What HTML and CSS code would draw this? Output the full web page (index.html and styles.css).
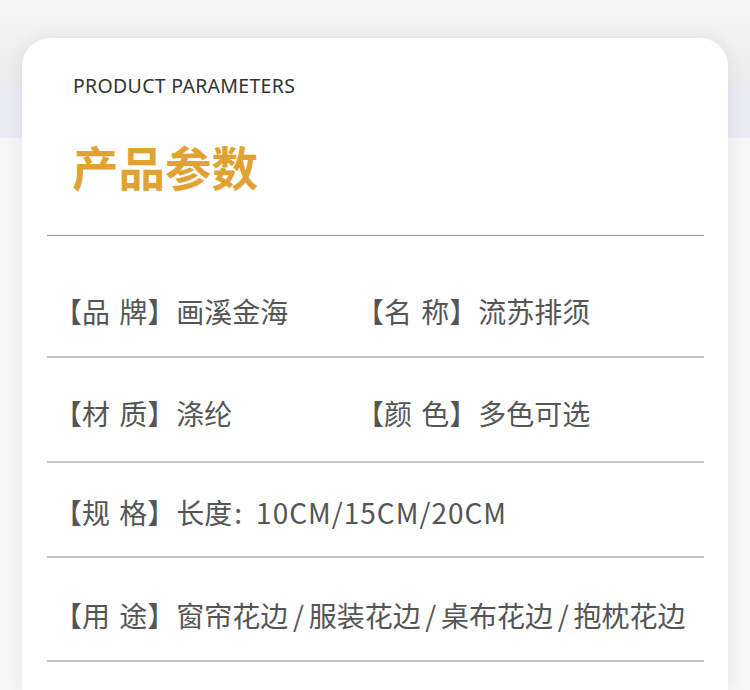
FILE: index.html
```html
<!DOCTYPE html>
<html lang="zh-CN">
<head>
<meta charset="utf-8">
<title>产品参数</title>
<link rel="stylesheet" href="styles.css">
</head>
<body>
<div class="page">
  <section class="card">
    <p class="en">PRODUCT PARAMETERS</p>
    <h1 class="title">产品参数</h1>
    <div class="rule rule-top"></div>
    <div class="row r1">
      <div class="cell"><span class="lb">【品 牌】</span>画溪金海</div>
      <div class="cell"><span class="lb">【名 称】</span>流苏排须</div>
    </div>
    <div class="rule"></div>
    <div class="row r2">
      <div class="cell"><span class="lb">【材 质】</span>涤纶</div>
      <div class="cell"><span class="lb">【颜 色】</span>多色可选</div>
    </div>
    <div class="rule"></div>
    <div class="row r3">
      <div class="cell wide"><span class="lb">【规 格】</span>长度<span class="colon">:</span><span class="lat">10CM/15CM/20CM</span></div>
    </div>
    <div class="rule"></div>
    <div class="row r4">
      <div class="cell wide"><span class="lb">【用 途】</span>窗帘花边<span class="sl">/</span>服装花边<span class="sl">/</span>桌布花边<span class="sl">/</span>抱枕花边</div>
    </div>
    <div class="rule"></div>
  </section>
</div>
</body>
</html>
```
FILE: styles.css
```css
html, body {
  margin: 0;
  padding: 0;
}
body {
  width: 750px;
  height: 690px;
  overflow: hidden;
  background:
    linear-gradient(to bottom,
      #f6f6f6 0px,
      #ebebeb 86px,
      #ebebf5 88px,
      #ebebf5 138px,
      #f6f6f6 138px,
      #f6f6f6 690px);
  font-family: "Noto Sans CJK SC", "Noto Sans", sans-serif;
}
.page {
  padding: 38px 0 0 22px;
}
.card {
  width: 706px;
  height: 652px;
  background: #ffffff;
  border-radius: 28px 28px 0 0;
  box-shadow: 0 0 18px rgba(0, 0, 0, 0.07);
  padding-top: 35px;
  box-sizing: border-box;
  overflow: hidden;
}
.en {
  margin: 0 0 0 51px;
  font-family: "Noto Sans", sans-serif;
  font-size: 19.5px;
  line-height: 26px;
  color: #333333;
  letter-spacing: 0.3px;
}
.title {
  margin: 44px 0 0 50px;
  font-family: "Noto Sans CJK SC", sans-serif;
  font-weight: 700;
  font-size: 46.5px;
  line-height: 46px;
  color: #e2a233;
}
.rule {
  margin: 0 24px 0 25px;
  height: 2px;
  background: #c6c6c6;
}
.rule-top {
  margin-top: 46px;
  height: 1px;
  background: #9e9e9e;
}
.row {
  display: grid;
  grid-template-columns: 302px 1fr;
  padding-left: 32px;
  font-size: 28px;
  line-height: 28px;
  color: #555555;
  white-space: nowrap;
}
.cell.wide {
  grid-column: 1 / span 2;
}
.lb {
  word-spacing: 3px;
  margin-right: 1px;
}
.r1 { padding-top: 61px; padding-bottom: 31px; }
.r2 { padding-top: 41px; padding-bottom: 34px; }
.r3 { padding-top: 35px; padding-bottom: 30px; }
.r4 { padding-top: 43px; padding-bottom: 31px; }
.colon {
  margin-left: 2px;
}
.lat {
  margin-left: 14px;
  letter-spacing: 1px;
}
.sl {
  margin: 0 4.7px;
}
```
